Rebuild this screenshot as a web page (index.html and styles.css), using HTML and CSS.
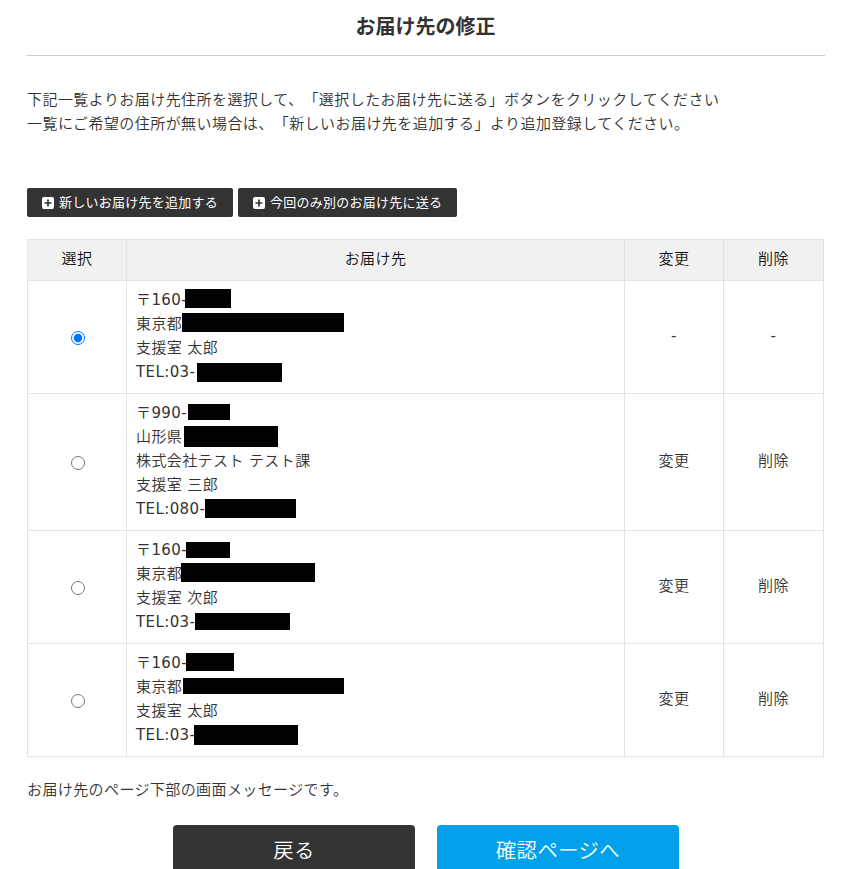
FILE: index.html
```
<!DOCTYPE html>
<html lang="ja">
<head>
<meta charset="utf-8">
<title>お届け先の修正</title>
<link rel="stylesheet" href="styles.css">
</head>
<body>
<main class="page">
  <h1 class="title">お届け先の修正</h1>
  <p class="lead">下記一覧よりお届け先住所を選択して、「選択したお届け先に送る」ボタンをクリックしてください<br>一覧にご希望の住所が無い場合は、「新しいお届け先を追加する」より追加登録してください。</p>
  <div class="tools">
    <a class="tool tool-add"><svg class="plus" viewBox="0 0 12 12"><rect width="12" height="12" rx="2" fill="#fff"/><path d="M6 2.5v7M2.5 6h7" stroke="#333" stroke-width="1.7"/></svg><span>新しいお届け先を追加する</span></a>
    <a class="tool tool-once"><svg class="plus" viewBox="0 0 12 12"><rect width="12" height="12" rx="2" fill="#fff"/><path d="M6 2.5v7M2.5 6h7" stroke="#333" stroke-width="1.7"/></svg><span>今回のみ別のお届け先に送る</span></a>
  </div>
  <table class="list">
    <colgroup><col class="c-pick"><col class="c-addr"><col class="c-edit"><col class="c-del"></colgroup>
    <thead><tr><th>選択</th><th>お届け先</th><th>変更</th><th>削除</th></tr></thead>
    <tbody>
      <tr>
        <td><input type="radio" name="addr" checked></td>
        <td class="addr"><div class="lines">
          <div>〒<span class="num">160-</span></div><div>東京都</div><div>支援室 太郎</div><div class="num">TEL:03-</div>
          <i class="mask m1a"></i><i class="mask m1b"></i><i class="mask m1c"></i>
        </div></td>
        <td class="num">-</td><td class="num">-</td>
      </tr>
      <tr>
        <td><input type="radio" name="addr"></td>
        <td class="addr"><div class="lines">
          <div>〒<span class="num">990-</span></div><div>山形県</div><div>株式会社テスト テスト課</div><div>支援室 三郎</div><div class="num">TEL:080-</div>
          <i class="mask m2a"></i><i class="mask m2b"></i><i class="mask m2c"></i>
        </div></td>
        <td>変更</td><td>削除</td>
      </tr>
      <tr>
        <td><input type="radio" name="addr"></td>
        <td class="addr"><div class="lines">
          <div>〒<span class="num">160-</span></div><div>東京都</div><div>支援室 次郎</div><div class="num">TEL:03-</div>
          <i class="mask m3a"></i><i class="mask m3b"></i><i class="mask m3c"></i>
        </div></td>
        <td>変更</td><td>削除</td>
      </tr>
      <tr>
        <td><input type="radio" name="addr"></td>
        <td class="addr"><div class="lines">
          <div>〒<span class="num">160-</span></div><div>東京都</div><div>支援室 太郎</div><div class="num">TEL:03-</div>
          <i class="mask m4a"></i><i class="mask m4b"></i><i class="mask m4c"></i>
        </div></td>
        <td>変更</td><td>削除</td>
      </tr>
    </tbody>
  </table>
  <p class="note">お届け先のページ下部の画面メッセージです。</p>
  <div class="actions"><a class="btn">戻る</a><a class="btn btn-next">確認ページへ</a></div>
</main>
</body>
</html>
```
FILE: styles.css
```
* { box-sizing: border-box; }
html { overflow: hidden; }
body {
  margin: 0;
  height: 869px;
  overflow: hidden;
  background: #fff;
  color: #333;
  font: 350 15px/24px "DejaVu Sans", "Noto Sans CJK JP", sans-serif;
  letter-spacing: 0.4px;
  text-spacing-trim: space-all;
}
.page { width: 798px; margin-left: 27px; }
.title {
  margin: 0;
  height: 56px;
  padding: 12px 1px 0 0;
  border-bottom: 1px solid #ccc;
  text-align: center;
  font-size: 20px;
  font-weight: 700;
  line-height: 30px;
  letter-spacing: 0;
}
.lead { margin: 32px 0 0; letter-spacing: 0.44px; white-space: nowrap; }
.tools { display: flex; gap: 5px; margin-top: 52px; }
.tool {
  display: flex;
  align-items: center;
  height: 29px;
  padding-left: 15px;
  border-radius: 2px;
  background: #333;
  color: #fff;
  font-size: 13px;
  font-weight: 400;
  letter-spacing: 0.25px;
  white-space: nowrap;
}
.tool-add { width: 206px; }
.tool-once { width: 219px; }
.plus { width: 12px; height: 12px; margin-right: 5px; }
.list {
  width: 797px;
  margin-top: 22px;
  table-layout: fixed;
  border-collapse: separate;
  border-spacing: 0;
  border: solid #e4e4e4;
  border-width: 1px 0 0 1px;
}
.c-pick { width: 99px; }
.c-addr { width: 498px; }
.c-edit { width: 99px; }
.c-del { width: 100px; }
th, td {
  padding: 0;
  border: solid #e4e4e4;
  border-width: 0 1px 1px 0;
  text-align: center;
  vertical-align: middle;
}
th {
  height: 41px;
  padding-bottom: 2px;
  background: #f1f1f1;
  color: #111;
  font-weight: 350;
}
td { padding-bottom: 2px; }
td.addr { padding: 0; text-align: left; }
.num { font-weight: 400; }
input { display: block; width: 14px; height: 14px; margin: 4px 0 0 43px; }
.lines { position: relative; padding: 7px 9px 9px; white-space: nowrap; }
.mask { position: absolute; background: #000; }
.m1a { left: 58px; top: 8px; width: 46px; height: 19px; }
.m1b { left: 55px; top: 32px; width: 162px; height: 19px; }
.m1c { left: 70px; top: 82px; width: 85px; height: 19px; }
.m2a { left: 61px; top: 10px; width: 42px; height: 16px; }
.m2b { left: 57px; top: 32px; width: 94px; height: 21px; }
.m2c { left: 78px; top: 105px; width: 91px; height: 19px; }
.m3a { left: 59px; top: 11px; width: 44px; height: 16px; }
.m3b { left: 54px; top: 32px; width: 134px; height: 19px; }
.m3c { left: 68px; top: 82px; width: 95px; height: 17px; }
.m4a { left: 59px; top: 9px; width: 48px; height: 18px; }
.m4b { left: 56px; top: 34px; width: 161px; height: 16px; }
.m4c { left: 67px; top: 81px; width: 104px; height: 20px; }
.note { margin: 21px 0 0; }
.actions { display: flex; gap: 22px; margin: 23px 0 0 146px; }
.btn {
  width: 242px;
  height: 54px;
  border-radius: 4px;
  background: #333;
  color: #fff;
  text-align: center;
  font-size: 20.4px;
  line-height: 52px;
}
.btn-next { background: #00a1ea; }
```
